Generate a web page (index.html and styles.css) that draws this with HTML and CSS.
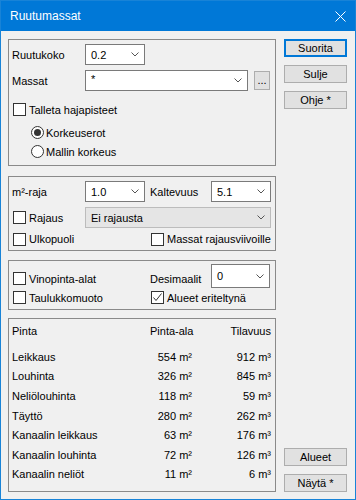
FILE: index.html
```html
<!DOCTYPE html>
<html lang="fi">
<head>
    <meta charset="UTF-8">
    <meta name="viewport" content="width=device-width, initial-scale=1.0">
    <title>Ruutumassat</title>
    <link rel="stylesheet" href="styles.css">
</head>
<body>

    <div class="window">
        <div class="titlebar">
            <span class="title">Ruutumassat</span>
            <svg class="close" width="11" height="11" viewBox="0 0 11 11">
                <path d="M0.5 0.5 L10.5 10.5 M10.5 0.5 L0.5 10.5" stroke="#fff" stroke-width="1" fill="none"/>
            </svg>
        </div>

        <div class="client">
            <div class="left">
                <div class="group g1">
                    <div class="row">
                        <span class="label">Ruutukoko</span>
                        <div class="combo w60"><span>0.2</span><svg class="chev" width="8" height="5" viewBox="0 0 8 5"><polyline points="0.5,0.5 4,4 7.5,0.5" fill="none" stroke="#555"/></svg></div>
                    </div>
                    <div class="row row-mass">
                        <span class="label">Massat</span>
                        <div class="combo w163"><span class="star">*</span><svg class="chev" width="8" height="5" viewBox="0 0 8 5"><polyline points="0.5,0.5 4,4 7.5,0.5" fill="none" stroke="#555"/></svg></div>
                        <button class="dots">...</button>
                    </div>
                    <label class="check check-save"><span class="box"></span>Talleta hajapisteet</label>
                    <label class="radio radio-first"><span class="dot on"></span>Korkeuserot</label>
                    <label class="radio"><span class="dot"></span>Mallin korkeus</label>
                </div>

                <div class="group g2">
                    <div class="row">
                        <span class="label">m²-raja</span>
                        <div class="combo w60"><span>1.0</span><svg class="chev" width="8" height="5" viewBox="0 0 8 5"><polyline points="0.5,0.5 4,4 7.5,0.5" fill="none" stroke="#555"/></svg></div>
                        <span class="label label2">Kaltevuus</span>
                        <div class="combo w60"><span>5.1</span><svg class="chev" width="8" height="5" viewBox="0 0 8 5"><polyline points="0.5,0.5 4,4 7.5,0.5" fill="none" stroke="#555"/></svg></div>
                    </div>
                    <div class="row row-limit">
                        <label class="check col1"><span class="box"></span>Rajaus</label>
                        <div class="combo list w186"><span>Ei rajausta</span><svg class="chev" width="8" height="5" viewBox="0 0 8 5"><polyline points="0.5,0.5 4,4 7.5,0.5" fill="none" stroke="#555"/></svg></div>
                    </div>
                    <div class="row row-small">
                        <label class="check wide1"><span class="box"></span>Ulkopuoli</label>
                        <label class="check"><span class="box"></span>Massat rajausviivoille</label>
                    </div>
                </div>

                <div class="group g3">
                    <div class="row row-dec">
                        <label class="check wide1"><span class="box"></span>Vinopinta-alat</label>
                        <span class="label label2 dec-label">Desimaalit</span>
                        <div class="combo w59 tall"><span>0</span><svg class="chev" width="8" height="5" viewBox="0 0 8 5"><polyline points="0.5,0.5 4,4 7.5,0.5" fill="none" stroke="#555"/></svg></div>
                    </div>
                    <div class="row row-small2">
                        <label class="check wide1"><span class="box"></span>Taulukkomuoto</label>
                        <label class="check"><span class="box"><svg width="11" height="11" viewBox="0 0 11 11"><polyline points="1.5,5.5 4,8.5 9.5,1.5" fill="none" stroke="#333"/></svg></span>Alueet eriteltynä</label>
                    </div>
                </div>

                <div class="group g4">
                    <div class="grid thead">
                        <span class="cell">Pinta</span>
                        <span class="cell">Pinta-ala</span>
                        <span class="cell num">Tilavuus</span>
                    </div>
                    <div class="grid tbody" id="volumes"></div>
                </div>
            </div>

            <div class="right">
                <div class="btns">
                    <button class="btn default">Suorita</button>
                    <button class="btn">Sulje</button>
                    <button class="btn">Ohje *</button>
                </div>
                <div class="btns">
                    <button class="btn">Alueet</button>
                    <button class="btn">Näytä *</button>
                </div>
            </div>
        </div>
    </div>

    <script>
        const rows = [
            ['Leikkaus', 554, 912],
            ['Louhinta', 326, 845],
            ['Neliölouhinta', 118, 59],
            ['Täyttö', 280, 262],
            ['Kanaalin leikkaus', 63, 176],
            ['Kanaalin louhinta', 72, 126],
            ['Kanaalin neliöt', 11, 6]
        ];

        const list = document.getElementById('volumes');
        rows.forEach(([name, area, volume]) => {
            list.innerHTML += `
                <span class="cell">${name}</span>
                <span class="cell num">${area} m²</span>
                <span class="cell num">${volume} m³</span>
            `;
        });
    </script>

</body>
</html>
```

FILE: styles.css
```css
html, body {
    margin: 0;
}
body {
    font-family: "Liberation Sans", Arial, sans-serif;
    font-size: 11px;
    color: #000;
    background: #f0f0f0;
}
.window {
    width: 356px;
    height: 500px;
    box-sizing: border-box;
    border: 1px solid #1883d7;
    background: #f0f0f0;
    display: flex;
    flex-direction: column;
}
.titlebar {
    height: 30px;
    flex: none;
    background: #0078d7;
    color: #fff;
    display: flex;
    align-items: center;
    justify-content: space-between;
    padding: 0 9px 0 9px;
}
.title {
    font-size: 12px;
}
.close {
    display: block;
}
.client {
    display: flex;
    padding: 8px 8px 0 7px;
}
.left {
    width: 268px;
}
.right {
    margin-left: auto;
    width: 63px;
    height: 453px;
    display: flex;
    flex-direction: column;
    justify-content: space-between;
}

/* group boxes */
.group {
    border: 1px solid #8a8a8a;
    box-sizing: border-box;
    padding: 0 3px;
}
.g1 {
    height: 127px;
    padding-top: 4px;
}
.g2 {
    height: 75px;
    margin-top: 10px;
    padding-top: 4px;
}
.g3 {
    height: 50px;
    margin-top: 9px;
    padding-top: 3px;
}
.g4 {
    height: 174px;
    margin-top: 8px;
    padding-top: 2px;
}

.row {
    display: flex;
    align-items: center;
    height: 21px;
}
.row-mass, .row-limit {
    margin-top: 5px;
}
.row-small {
    height: 18px;
    margin-top: 2px;
}
.row-dec {
    height: 24px;
    align-items: flex-start;
}
.row-dec .check, .row-dec .dec-label {
    margin-top: 5px;
    height: 19px;
    display: flex;
    align-items: center;
}
.row-small2 {
    height: 19px;
}
.label {
    width: 73px;
    flex: none;
}
.label2 {
    width: 61px;
    margin-left: 5px;
}
.dec-label {
    margin-left: 0;
}

/* combo boxes */
.combo {
    height: 21px;
    box-sizing: border-box;
    border: 1px solid #7a7a7a;
    background: #fff;
    display: flex;
    align-items: center;
    padding: 0 5px 0 5px;
    flex: none;
}
.combo .chev {
    margin-left: auto;
    display: block;
}
.combo.list {
    background: #e5e5e5;
    border-color: #bcbcbc;
}
.combo.tall {
    height: 24px;
}
.star {
    align-self: flex-start;
    margin-top: 2px;
}
.w59 { width: 59px; }
.w60 { width: 60px; }
.w163 { width: 163px; }
.w186 { width: 186px; }

.dots {
    width: 16px;
    height: 19px;
    margin-left: 6px;
    padding: 0;
    border: 1px solid #adadad;
    background: #e1e1e1;
    font: inherit;
    line-height: 13px;
}

/* check boxes and radios */
.check, .radio {
    display: flex;
    align-items: center;
    height: 19px;
    white-space: nowrap;
}
.box {
    width: 13px;
    height: 13px;
    box-sizing: border-box;
    border: 1px solid #333;
    background: #fff;
    margin: 0 3px 0 1px;
    flex: none;
}
.box svg {
    display: block;
}
.col1 {
    width: 73px;
    flex: none;
}
.wide1 {
    width: 138px;
    flex: none;
}
.check-save {
    margin-top: 9px;
}
.radio {
    padding-left: 19px;
}
.radio-first {
    margin-top: 4px;
}
.dot {
    width: 13px;
    height: 13px;
    box-sizing: border-box;
    border: 1px solid #333;
    border-radius: 50%;
    background: #fff;
    margin-right: 2px;
    display: flex;
    align-items: center;
    justify-content: center;
    flex: none;
}
.dot.on::after {
    content: "";
    width: 7px;
    height: 7px;
    border-radius: 50%;
    background: #333;
}

/* table */
.grid {
    display: grid;
    grid-template-columns: 138px 42px 79px;
}
.thead {
    grid-auto-rows: 20px;
    margin-bottom: 6px;
}
.tbody {
    grid-auto-rows: 19.6px;
}
.cell {
    display: flex;
    align-items: center;
    white-space: nowrap;
}
.cell.num {
    justify-content: flex-end;
}

/* buttons */
.btn {
    display: block;
    width: 63px;
    height: 18px;
    box-sizing: border-box;
    padding: 0;
    border: 1px solid #adadad;
    background: #e1e1e1;
    font: inherit;
    color: #000;
}
.btn + .btn {
    margin-top: 8px;
}
.btn.default {
    border: 2px solid #0078d7;
}
```
